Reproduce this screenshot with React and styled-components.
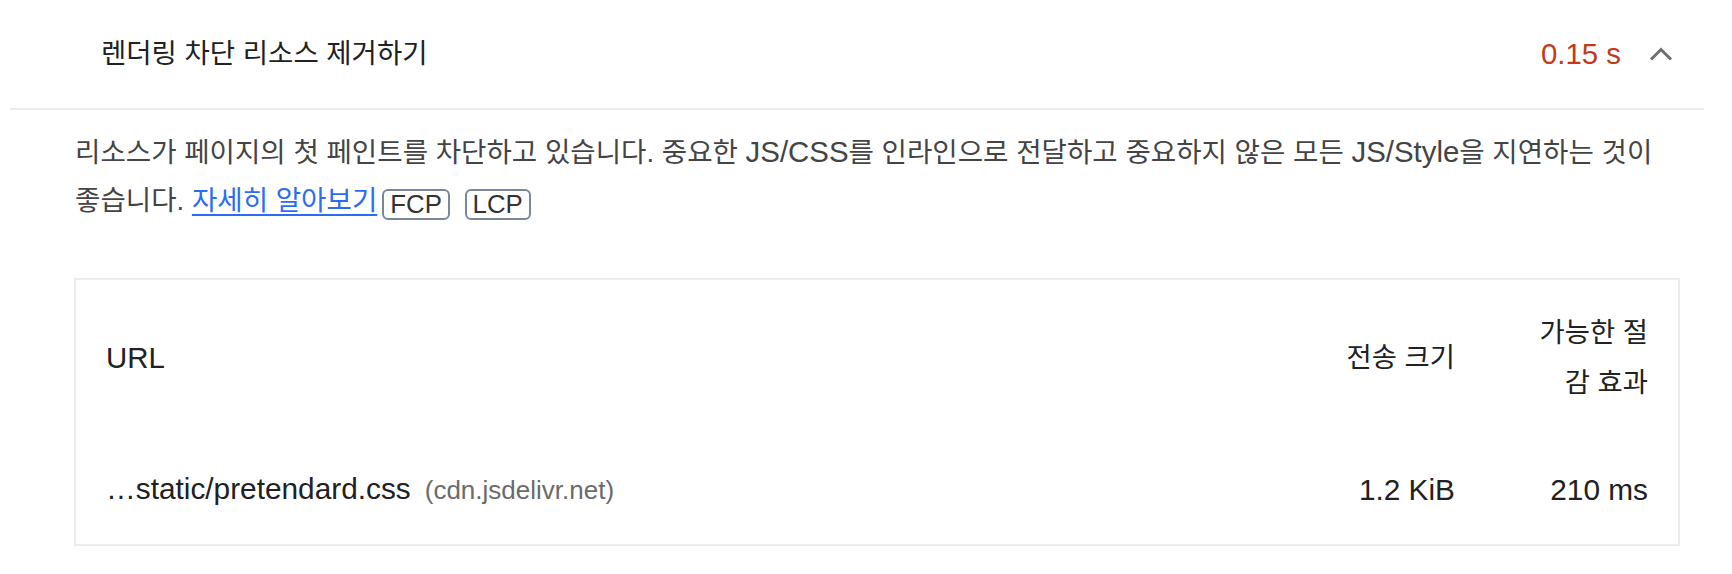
import React from "react";
import styled, { createGlobalStyle } from "styled-components";

const GlobalStyle = createGlobalStyle`
  html, body {
    margin: 0;
    padding: 0;
    background: #ffffff;
  }
  body {
    font-family: "Liberation Sans", "Noto Sans CJK KR", sans-serif;
    color: #212121;
  }
`;

const Audit = styled.section`
  padding: 0 28px 0 10px;
`;

const Header = styled.div`
  display: flex;
  align-items: center;
  height: 108px;
  padding: 0 31px 0 91px;
  border-bottom: 2px solid #ebebeb;
`;

const Title = styled.div`
  flex: 1;
  font-size: 27.5px;
  line-height: 40px;
  color: #212121;
`;

const Value = styled.div`
  font-size: 29.4px;
  line-height: 40px;
  color: #c23a18;
`;

const Chevron = styled.svg`
  display: block;
  margin-left: 28px;
  width: 24px;
  height: 14px;
`;

const Body = styled.div`
  padding: 0 24px 0 64px;
`;

const Description = styled.p`
  margin: 18px 0 0 1px;
  font-size: 27.6px;
  line-height: 48px;
  color: #444444;
`;

const Latin = styled.span`
  font-size: 29.4px;
`;

const Link = styled.a`
  color: #2a6df4;
  text-decoration: underline;
  text-decoration-thickness: 2px;
  text-underline-offset: 4px;
`;

const Badge = styled.span`
  display: inline-block;
  box-sizing: border-box;
  height: 31px;
  padding: 0 6px;
  margin: 0 2px 0 5px;
  border: 2px solid #7a8797;
  border-radius: 6px;
  font-size: 25.8px;
  line-height: 27px;
  color: #333333;
  vertical-align: -3px;
`;

const Table = styled.div`
  margin-top: 53px;
  border: 2px solid #ececec;
`;

const Row = styled.div`
  display: grid;
  grid-template-columns: 1fr 160px 130px;
  column-gap: 63px;
  align-items: center;
  padding: ${(p) => (p.$head ? "28px 30px" : "29px 30px 30px")};
`;

const HeadCell = styled.div`
  font-size: ${(p) => (p.$latin ? "29.4px" : "27.4px")};
  line-height: 50px;
  color: #212121;
  text-align: ${(p) => (p.$right ? "right" : "left")};
`;

const Cell = styled.div`
  font-size: 29.8px;
  line-height: 47px;
  color: #212121;
  text-align: ${(p) => (p.$right ? "right" : "left")};
  white-space: nowrap;
`;

const Host = styled.span`
  margin-left: 14px;
  font-size: 26px;
  color: #6b6b6b;
`;

export default function App() {
  return (
    <>
      <GlobalStyle />
      <Audit>
        <Header>
          <Title>렌더링 차단 리소스 제거하기</Title>
          <Value>0.15 s</Value>
          <Chevron viewBox="0 0 24 14" aria-hidden="true">
            <polyline
              points="2,12.5 12,2.5 22,12.5"
              fill="none"
              stroke="#6e6e6e"
              strokeWidth="3"
            />
          </Chevron>
        </Header>
        <Body>
          <Description>
            리소스가 페이지의 첫 페인트를 차단하고 있습니다. 중요한{" "}
            <Latin>JS/CSS</Latin>를 인라인으로 전달하고 중요하지 않은 모든{" "}
            <Latin>JS/Style</Latin>을 지연하는 것이 좋습니다.{" "}
            <Link href="#">자세히 알아보기</Link>
            <Badge>FCP</Badge> <Badge>LCP</Badge>
          </Description>
          <Table>
            <Row $head>
              <HeadCell $latin>URL</HeadCell>
              <HeadCell $right>전송 크기</HeadCell>
              <HeadCell $right>가능한 절감 효과</HeadCell>
            </Row>
            <Row>
              <Cell>
                …static/pretendard.css<Host>(cdn.jsdelivr.net)</Host>
              </Cell>
              <Cell $right>1.2 KiB</Cell>
              <Cell $right>210 ms</Cell>
            </Row>
          </Table>
        </Body>
      </Audit>
    </>
  );
}
